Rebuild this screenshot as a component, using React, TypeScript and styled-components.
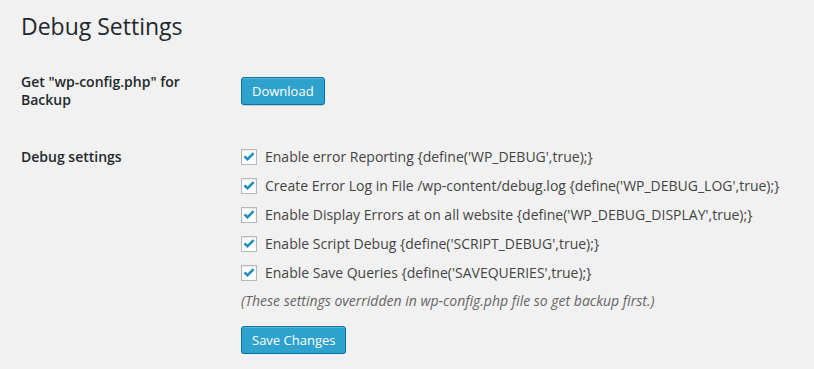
import React from "react";
import styled, { createGlobalStyle } from "styled-components";

const Global = createGlobalStyle`
  html, body { margin: 0; padding: 0; background: #f1f1f1; }
  body { font-family: "Open Sans", "Noto Sans", sans-serif; color: #444; font-size: 14px; }
`;

const Wrap = styled.div`
  padding: 12px 0 0 21px;
`;

const Title = styled.h1`
  margin: 0;
  font-size: 23px;
  font-weight: 400;
  line-height: 29px;
  color: #23282d;
`;

const Row = styled.div<{ $top: number }>`
  display: grid;
  grid-template-columns: 220px 1fr;
  align-items: start;
  margin-top: ${(p) => p.$top}px;
`;

const Label = styled.div`
  width: 200px;
  font-weight: 600;
  line-height: 18px;
  color: #23282d;
`;

const Field = styled.div<{ $pad: number }>`
  padding-top: ${(p) => p.$pad}px;
  display: flex;
  flex-direction: column;
  align-items: flex-start;
`;

const Button = styled.button`
  font-family: "Open Sans", "Noto Sans", sans-serif;
  font-size: 13px;
  height: 28px;
  line-height: 26px;
  padding: 0 10px 1px;
  border-radius: 3px;
  border: 1px solid #0074a2;
  background: #2ea2cc;
  color: #fff;
  box-shadow: inset 0 1px 0 rgba(120, 200, 230, 0.5), 0 1px 0 rgba(0, 0, 0, 0.15);
  cursor: pointer;
`;

const Options = styled.div`
  display: flex;
  flex-direction: column;
  gap: 11px;
`;

const Option = styled.label`
  display: flex;
  align-items: center;
  height: 18px;
  line-height: 18px;
  gap: 8px;
  color: #444;
  white-space: nowrap;
`;

const Box = styled.span`
  width: 16px;
  height: 16px;
  box-sizing: border-box;
  border: 1px solid #b4b9be;
  background: #fff;
  box-shadow: inset 0 1px 2px rgba(0, 0, 0, 0.1);
  display: flex;
  align-items: center;
  justify-content: center;
  flex-shrink: 0;
`;

const Note = styled.p`
  margin: 10px 0 0;
  font-style: italic;
  color: #666;
  line-height: 18px;
`;

const SaveButton = styled(Button)`
  margin-top: 16px;
`;

const Check = () => (
  <svg width="14" height="14" viewBox="0 0 14 14">
    <polygon points="1.6,7.2 3.4,5.4 5.5,7.5 10.7,2.3 12.5,4.1 5.5,11.1" fill="#1e8cbe" />
  </svg>
);

const options = [
  "Enable error Reporting {define('WP_DEBUG',true);}",
  "Create Error Log in File /wp-content/debug.log {define('WP_DEBUG_LOG',true);}",
  "Enable Display Errors at on all website {define('WP_DEBUG_DISPLAY',true);}",
  "Enable Script Debug {define('SCRIPT_DEBUG',true);}",
  "Enable Save Queries {define('SAVEQUERIES',true);}",
];

export default function App() {
  return (
    <>
      <Global />
      <Wrap>
        <Title>Debug Settings</Title>
        <Row $top={32}>
          <Label>Get "wp-config.php" for Backup</Label>
          <Field $pad={4}>
            <Button>Download</Button>
          </Field>
        </Row>
        <Row $top={39}>
          <Label>Debug settings</Label>
          <Field $pad={0}>
            <Options>
              {options.map((o) => (
                <Option key={o}>
                  <Box>
                    <Check />
                  </Box>
                  {o}
                </Option>
              ))}
            </Options>
            <Note>(These settings overridden in wp-config.php file so get backup first.)</Note>
            <SaveButton>Save Changes</SaveButton>
          </Field>
        </Row>
      </Wrap>
    </>
  );
}
